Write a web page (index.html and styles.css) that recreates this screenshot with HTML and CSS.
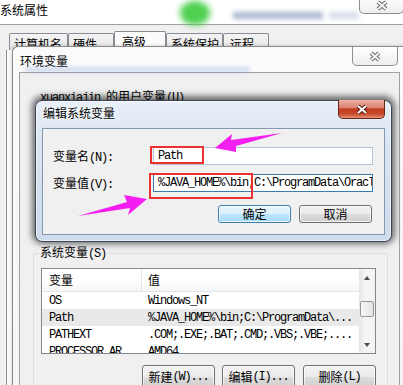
FILE: index.html
```html
<!DOCTYPE html>
<html>
<head>
<meta charset="utf-8">
<link rel="stylesheet" href="styles.css">
</head>
<body>
<div class="sysprop">
  <div class="sp-title">
    <span class="sp-title-text">系统属性</span>
    <span class="blur-dot"></span>
    <span class="blur-text"></span>
    <span class="blur-text faint"></span>
    <div class="close-gray close-sp">
      <svg width="14" height="11" viewBox="0 0 14 11"><path d="M3 2 L11 9 M11 2 L3 9" class="x-out"/><path d="M3 2 L11 9 M11 2 L3 9" class="x-in"/></svg>
    </div>
  </div>
  <div class="sp-body">
    <div class="tabs">
      <div class="tab t1">计算机名</div>
      <div class="tab t2">硬件</div>
      <div class="tab t3 sel">高级</div>
      <div class="tab t4">系统保护</div>
      <div class="tab t5">远程</div>
    </div>
    <div class="sp-panel"></div>
  </div>
</div>

<div class="env">
  <div class="env-title">
    <div class="env-title-col">
      <span class="env-title-text">环境变量</span>
      <span class="env-sub"></span>
    </div>
    <div class="close-gray close-env">
      <svg width="14" height="11" viewBox="0 0 14 11"><path d="M3 2 L11 9 M11 2 L3 9" class="x-out"/><path d="M3 2 L11 9 M11 2 L3 9" class="x-in"/></svg>
    </div>
  </div>
  <div class="env-body">
    <div class="user-group"><span class="mono">xuanxiajin </span>的用户变量<span class="mono">(U)</span></div>
    <fieldset class="sys-group">
      <legend class="sys-legend">系统变量<span class="mono">(S)</span></legend>
      <div class="lv">
        <div class="lv-main">
          <div class="lv-head">
            <div class="c1">变量</div>
            <div class="c2">值</div>
          </div>
          <div class="lv-row mono"><div class="c1">OS</div><div class="c2">Windows_NT</div></div>
          <div class="lv-row mono hl"><div class="c1">Path</div><div class="c2">%JAVA_HOME%\bin;C:\ProgramData\...</div></div>
          <div class="lv-row mono"><div class="c1">PATHEXT</div><div class="c2">.COM;.EXE;.BAT;.CMD;.VBS;.VBE;....</div></div>
          <div class="lv-row mono"><div class="c1">PROCESSOR_AR</div><div class="c2">AMD64</div></div>
        </div>
        <div class="lv-sb">
          <div class="sb-btn"><span class="tri-up"></span></div>
          <div class="sb-thumb"></div>
          <div class="sb-space"></div>
          <div class="sb-btn"><span class="tri-down"></span></div>
        </div>
      </div>
      <div class="env-btns">
        <div class="wbtn">新建<span class="mono">(W)...</span></div>
        <div class="wbtn b-edit">编辑<span class="mono">(I)...</span></div>
        <div class="wbtn b-del">删除<span class="mono">(L)</span></div>
      </div>
    </fieldset>
  </div>
</div>

<div class="dlg">
  <div class="dlg-title">
    <span class="dlg-title-text">编辑系统变量</span>
    <div class="close-red">
      <svg width="14" height="11" viewBox="0 0 14 11"><path d="M3 2 L11 9 M11 2 L3 9" class="xr-out"/><path d="M3 2 L11 9 M11 2 L3 9" class="xr-in"/></svg>
    </div>
  </div>
  <div class="dlg-client">
    <div class="f-row">
      <span class="f-label">变量名<span class="mono">(N):</span></span>
      <div class="f-input mono">Path</div>
    </div>
    <div class="f-row">
      <span class="f-label">变量值<span class="mono">(V):</span></span>
      <div class="f-input focus mono">%JAVA_HOME%\bin;C:\ProgramData\Oracl</div>
    </div>
    <div class="dlg-btns">
      <div class="dbtn def">确定</div>
      <div class="dbtn">取消</div>
    </div>
  </div>
</div>

<div class="redbox rb1"></div>
<div class="redbox rb2"></div>

<svg class="arrows" width="403" height="385" viewBox="0 0 403 385">
  <polygon points="215,148 232,134 231,140 282,133 236,146 236,152" class="arrow"/>
  <polygon points="147,199 124,195 127,202 78,216 130,208 128,215" class="arrow"/>
</svg>
</body>
</html>
```

FILE: styles.css
```css
* { box-sizing: border-box; }
html, body { margin: 0; padding: 0; }
body {
  width: 403px;
  height: 385px;
  overflow: hidden;
  position: relative;
  background: #fff;
  font-family: "Noto Sans CJK SC", "Liberation Sans", sans-serif;
  font-size: 12px;
  line-height: 12px;
  color: #000;
}
.mono {
  font-family: "Liberation Mono", "DejaVu Sans Mono", monospace;
  font-size: 12px;
  letter-spacing: -1.2px;
}

/* ---------- 系统属性 background window ---------- */
.sysprop { display: flex; flex-direction: column; height: 385px; }
.sp-title {
  height: 25px;
  border-bottom: 1px solid #a0a0a0;
  display: flex;
  align-items: flex-start;
  background: #fff;
}
.sp-title > * { flex-shrink: 0; }
.sp-title-text { padding-top: 4px; white-space: nowrap; }
.blur-dot {
  margin-left: 132px;
  margin-top: 1px;
  width: 30px;
  height: 24px;
  border-radius: 50%;
  background: #4fd04f;
  filter: blur(3px);
}
.blur-text {
  margin-left: 23px;
  margin-top: 12px;
  width: 90px;
  height: 7px;
  background: #8ea0c2;
  filter: blur(2.5px);
  opacity: .75;
}
.blur-text.faint { margin-left: 6px; width: 30px; opacity: .35; }
.close-gray {
  display: flex;
  align-items: center;
  justify-content: center;
  border: 1px solid #8f8f8f;
  border-top: none;
  border-radius: 0 0 5px 5px;
  background: linear-gradient(#ffffff, #eeeeee);
}
.close-sp { margin-left: auto; margin-top: -5px; width: 45px; height: 19px; padding-top: 3px; }
.x-out { stroke: #6a6a6a; stroke-width: 4; fill: none; }
.x-in { stroke: #f4f4f4; stroke-width: 2; fill: none; }
.xr-out { stroke: #5a1f14; stroke-width: 4; fill: none; }
.xr-in { stroke: #ffffff; stroke-width: 2; fill: none; }

.sp-body { flex: 1; background: #f0f0f0; display: flex; flex-direction: column; }
.tabs { display: flex; align-items: flex-start; padding: 6px 0 0 9px; height: 25px; }
.tab {
  flex-shrink: 0;
  height: 19px;
  margin-top: 2px;
  border: 1px solid #898c95;
  border-bottom: none;
  border-radius: 2px 2px 0 0;
  background: linear-gradient(#f4f4f4, #e3e3e3);
  padding: 4px 0 0 4px;
  white-space: nowrap;
}
.t1 { width: 59px; }
.t2 { width: 46px; }
.t3 { width: 52px; }
.t4 { width: 57px; }
.t5 { width: 46px; padding-left: 6px; }
.tab.sel { margin-top: 0; height: 21px; background: #fcfcfc; padding-left: 7px; }
.sp-panel { flex: 1; margin-left: 6px; border-left: 1px solid #898c95; background: #fcfcfc; }

/* ---------- 环境变量 window ---------- */
.env {
  position: absolute;
  left: 12px;
  top: 46px;
  width: 392px;
  height: 345px;
  border: 1px solid #8a8a8a;
  border-right: none;
  border-bottom: none;
  border-radius: 6px 0 0 0;
  background: linear-gradient(#fbfbfb, #f5f5f5);
  box-shadow: -1px -1px 3px rgba(0,0,0,.12);
  display: flex;
  flex-direction: column;
}
.env-title { height: 29px; display: flex; align-items: flex-start; }
.env-title-col { display: flex; flex-direction: column; padding: 8px 0 0 7px; }
.env-title-text { white-space: nowrap; }
.env-sub {
  margin-left: 5px;
  width: 225px;
  height: 5px;
  background: #7f9fd6;
  opacity: .35;
  filter: blur(2px);
}
.close-env { margin-left: auto; margin-right: 6px; width: 46px; height: 19px; }
.env-body {
  flex: 1;
  margin: 0 4px 0 6px;
  border: 1px solid #a0a0a0;
  border-bottom: none;
  background: #f0f0f0;
  padding-top: 17px;
}
.user-group { height: 156px; padding-left: 20px; white-space: nowrap; }
.sys-group {
  margin: 0 0 0 13px;
  width: 355px;
  border: 1px solid #d5dfe5;
  border-radius: 3px;
  padding: 0 7px 10px 7px;
  min-width: 0;
}
.sys-legend { padding: 0 1px; margin-left: -2px; line-height: 12px; white-space: nowrap; }

.lv {
  margin-top: 8px;
  width: 335px;
  height: 86px;
  border: 1px solid #828790;
  background: #fff;
  display: flex;
  overflow: hidden;
}
.lv-main { flex: 1; display: flex; flex-direction: column; min-width: 0; }
.lv-head {
  display: grid;
  grid-template-columns: 100px 1fr;
  height: 23px;
  flex-shrink: 0;
  border-bottom: 1px solid #e5e5e5;
  background: linear-gradient(#ffffff 55%, #f4f5f6);
}
.lv-head > div { display: flex; align-items: center; }
.lv-head .c1 { border-right: 1px solid #e5e5e5; padding-left: 7px; }
.lv-head .c2 { padding-left: 6px; }
.lv-row {
  display: grid;
  grid-template-columns: 100px 1fr;
  height: 17px;
  align-items: center;
  white-space: nowrap;
  flex-shrink: 0;
}
.lv-row > div { overflow: hidden; }
.lv-row .c1 { padding-left: 7px; }
.lv-row .c2 { padding-left: 6px; }
.lv-row.hl { background: #e9e9e9; }

.lv-sb {
  width: 16px;
  flex-shrink: 0;
  display: flex;
  flex-direction: column;
  background: linear-gradient(90deg, #e6e6e6, #f5f5f5 40%, #f3f3f3);
}
.sb-btn { height: 17px; display: flex; align-items: center; justify-content: center; flex-shrink: 0; }
.tri-up {
  width: 0; height: 0;
  border-left: 3.5px solid transparent;
  border-right: 3.5px solid transparent;
  border-bottom: 4px solid #4d4d4d;
}
.tri-down {
  width: 0; height: 0;
  border-left: 3.5px solid transparent;
  border-right: 3.5px solid transparent;
  border-top: 4px solid #4d4d4d;
}
.sb-thumb {
  margin: 15px 1px 0 1px;
  height: 16px;
  flex-shrink: 0;
  border: 1px solid #979797;
  border-radius: 2px;
  background: linear-gradient(90deg, #f7f7f7, #e2e2e2);
}
.sb-space { flex: 1; }

.env-btns { display: flex; justify-content: flex-end; width: 335px; margin-top: 11px; }
.wbtn {
  flex-shrink: 0;
  width: 73px;
  height: 23px;
  border: 1px solid #707070;
  border-radius: 3px;
  background: linear-gradient(#f2f2f2, #ebebeb 50%, #dddddd 51%, #cfcfcf);
  box-shadow: inset 0 0 0 1px rgba(255,255,255,.7);
  display: flex;
  align-items: center;
  justify-content: center;
  white-space: nowrap;
}
.b-edit { margin-left: 7px; }
.b-del { margin-left: 8px; }

/* ---------- 编辑系统变量 dialog ---------- */
.dlg {
  position: absolute;
  left: 35px;
  top: 100px;
  width: 357px;
  height: 142px;
  border: 1px solid rgba(20,30,50,.8);
  border-radius: 7px;
  background: linear-gradient(#e8eff8, #d8e4f1 35%, #cddbeb);
  box-shadow: 0 -1px 6px 3px rgba(0,0,0,.55), inset 0 0 0 1px rgba(255,255,255,.55);
  padding: 0 6px 6px 6px;
  display: flex;
  flex-direction: column;
}
.dlg-title { height: 27px; display: flex; align-items: flex-start; }
.dlg-title-text { padding: 6px 0 0 1px; white-space: nowrap; text-shadow: 0 0 6px #fff, 0 0 3px #fff; }
.close-red {
  margin-left: auto;
  margin-top: -1px;
  width: 47px;
  height: 19px;
  border: 1px solid #6a2418;
  border-top: none;
  border-radius: 0 0 5px 5px;
  background: linear-gradient(#ecb3a6, #da8470 42%, #c23a1f 50%, #c9492d 78%, #e5957a);
  display: flex;
  align-items: center;
  justify-content: center;
}
.dlg-client {
  flex: 1;
  background: #f0f0f0;
  border: 1px solid #8698b0;
  padding: 18px 0 0 10px;
}
.f-row { display: flex; align-items: center; height: 18px; }
.f-row + .f-row { margin-top: 9px; }
.f-label { width: 100px; flex-shrink: 0; white-space: nowrap; padding-top: 2px; }
.f-input {
  width: 220px;
  height: 18px;
  flex-shrink: 0;
  background: #fff;
  border: 1px solid #b6c5d6;
  padding: 0 2px 0 4px;
  display: flex;
  align-items: center;
  overflow: hidden;
  white-space: nowrap;
}
.f-input.focus { border-color: #3d7bad; }
.dlg-btns { display: flex; gap: 8px; margin: 13px 0 0 165px; }
.dbtn {
  width: 73px;
  height: 18px;
  border: 1px solid #707070;
  border-radius: 3px;
  background: linear-gradient(#f2f2f2, #ebebeb 50%, #dddddd 51%, #cfcfcf);
  box-shadow: inset 0 0 0 1px rgba(255,255,255,.7);
  display: flex;
  align-items: center;
  justify-content: center;
}
.dbtn.def {
  border-color: #3c7fb1;
  background: linear-gradient(#eaf6fd, #d9f0fc 50%, #bee6fd 51%, #a7d9f5);
}

/* ---------- annotations ---------- */
.redbox { position: absolute; border: 2px solid #ec2f2f; }
.rb1 { left: 150px; top: 146px; width: 54px; height: 18px; }
.rb2 { left: 149px; top: 173px; width: 104px; height: 26px; }
.arrows { position: absolute; left: 0; top: 0; pointer-events: none; }
.arrow { fill: #f51ef0; }
```
